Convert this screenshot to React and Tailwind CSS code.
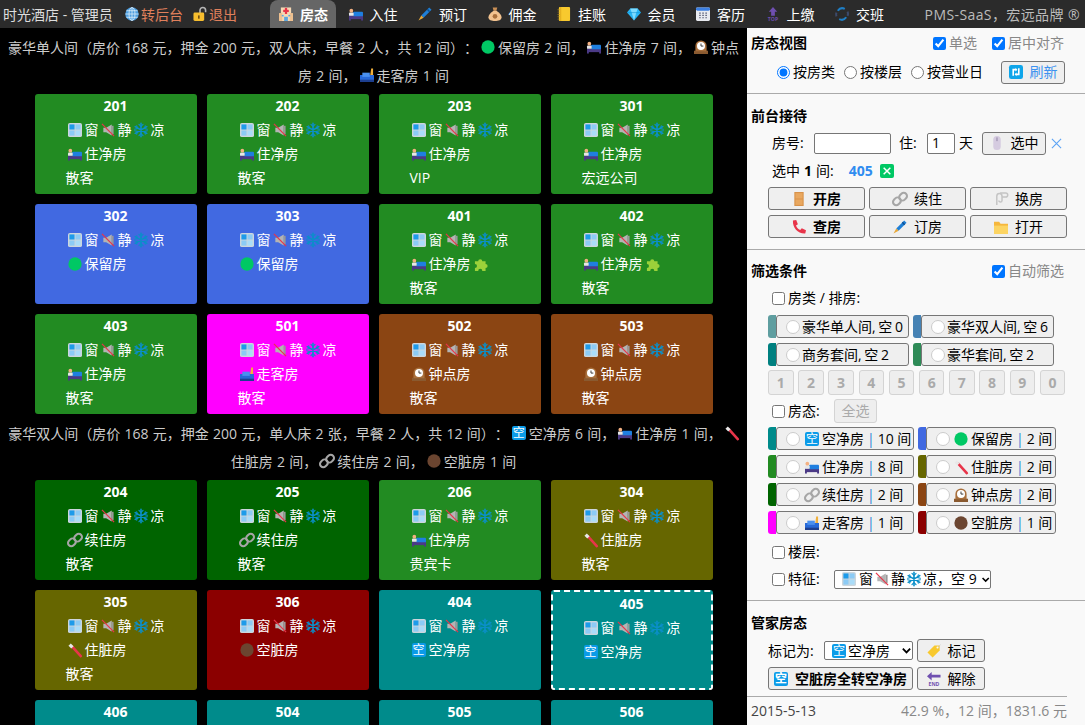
const Svg = ({ children, className = "w-[14px] h-[14px]" }) => (
  <svg viewBox="0.5 0.5 15 15" className={`${className} shrink-0 overflow-visible`}>
    {children}
  </svg>
);

const IconWindow = () => (
  <Svg>
    <rect x="0.5" y="0.5" width="15" height="15" rx="2" fill="#ccd6dd" />
    <rect x="2" y="2" width="5.5" height="5.5" fill="#1d9bea" />
    <rect x="8.5" y="2" width="5.5" height="5.5" fill="#8ccbf5" />
    <rect x="2" y="8.5" width="5.5" height="5.5" fill="#8ccbf5" />
    <rect x="8.5" y="8.5" width="5.5" height="5.5" fill="#a9dcf9" />
  </Svg>
);
const IconMute = () => (
  <Svg>
    <path d="M3 5.5h3L12 2v12l-6-3.5H3z" fill="#b4b4b4" />
    <path d="M12 3.5h2v9h-2z" fill="#999" />
    <path d="M1.5 1.5L14.5 14.5" stroke="#e8354a" strokeWidth="1.3" />
  </Svg>
);
const IconSnow = () => (
  <Svg>
    <g stroke="#0b8fc9" strokeLinecap="round" fill="none">
      <path d="M8 .8v14.4M1.8 4.4l12.4 7.2M14.2 4.4L1.8 11.6" strokeWidth="1.7" />
      <path d="M5.8 2L8 4.2 10.2 2M5.8 14L8 11.8 10.2 14M1.2 7.2l3-.7-.8-3M14.8 7.2l-3-.7.8-3M1.2 8.8l3 .7-.8 3M14.8 8.8l-3 .7.8 3" strokeWidth="1.2" />
    </g>
  </Svg>
);
const IconBed = () => (
  <Svg>
    <rect x="0.5" y="9.5" width="15" height="4" fill="#4b3a86" />
    <rect x="0.5" y="13" width="2" height="2" fill="#4b3a86" />
    <rect x="13.5" y="13" width="2" height="2" fill="#4b3a86" />
    <rect x="5" y="5.5" width="10.5" height="5" rx="1" fill="#1f7fe0" />
    <rect x="0.5" y="6.5" width="5" height="3.5" rx="1" fill="#e6e7e8" />
    <circle cx="3" cy="4.5" r="2" fill="#f4b183" />
  </Svg>
);
const IconDot = ({ color = "#00c864" }) => (
  <Svg>
    <circle cx="8" cy="8" r="7.1" fill={color} />
  </Svg>
);
const IconClock = () => (
  <Svg>
    <rect x="0.5" y="12" width="15" height="3.5" fill="#8a5a30" />
    <path d="M2 12.5V7a6 6 0 0112 0v5.5z" fill="#a86f3c" />
    <circle cx="8" cy="7" r="4.3" fill="#fff" />
    <path d="M8 4.3V7h2.5" stroke="#333" strokeWidth="1" fill="none" />
  </Svg>
);
const IconGuestOut = () => (
  <Svg>
    <path d="M.5 8h15v6H.5z" fill="#2769d8" />
    <rect x="3" y="5.5" width="8" height="4.5" fill="#4a90ee" />
    <rect x="0.5" y="13" width="15" height="2.5" fill="#1d3f8f" />
    <path d="M12.5 1h2v7h-3z" fill="#f0b03c" />
  </Svg>
);
const IconEmpty = () => (
  <span className="w-[14px] h-[14px] shrink-0 rounded-[2px] bg-[#0b9be8] text-white text-[12px] leading-[14px] text-center">
    空
  </span>
);
const IconLink = () => (
  <Svg>
    <g fill="none" stroke="#a6a6a6" strokeWidth="2.2">
      <rect x="7.8" y="1" width="7" height="9" rx="3.5" transform="rotate(45 11.3 5.5)" />
      <rect x="1.2" y="6" width="7" height="9" rx="3.5" transform="rotate(45 4.7 10.5)" />
    </g>
  </Svg>
);
const IconBrush = () => (
  <Svg>
    <path d="M5 4.5L14.2 14.5" stroke="#e8354a" strokeWidth="2.8" strokeLinecap="round" />
    <path d="M1 3.5L3.5 1 6.5 4 4 6.5z" fill="#e8e8e8" />
  </Svg>
);
const IconPuzzle = () => (
  <Svg>
    <path d="M1.5 5H5a2.2 2.2 0 114.4 0h3.5v3a2.2 2.2 0 110 4.4v3H9.4a2.2 2.2 0 10-4.4 0H1.5v-3a2.2 2.2 0 100-4.4z" fill="#9bd13a" />
  </Svg>
);
const IconGlobe = () => (
  <Svg>
    <circle cx="8" cy="8" r="7.2" fill="#4f9fe0" />
    <g fill="none" stroke="#d5e9f8" strokeWidth="0.9">
      <ellipse cx="8" cy="8" rx="3.2" ry="7" />
      <path d="M1 8h14M2 4.5h12M2 11.5h12M8 1v14" />
    </g>
  </Svg>
);
const IconLock = () => (
  <Svg>
    <path d="M8 7V4a3 3 0 016 0v2" fill="none" stroke="#b5b5b5" strokeWidth="1.7" />
    <rect x="1" y="6.5" width="11.5" height="9" rx="1.5" fill="#f6bd2e" />
    <rect x="5.9" y="9.5" width="1.7" height="3.5" fill="#6b4a10" />
  </Svg>
);
const IconHotel = () => (
  <Svg>
    <rect x="2.5" y="1" width="11" height="14.5" fill="#f7d9b4" />
    <rect x="0.5" y="7" width="3.5" height="8.5" fill="#eec08f" />
    <rect x="12" y="7" width="3.5" height="8.5" fill="#eec08f" />
    <rect x="6.8" y="1.5" width="2.4" height="6.5" fill="#e8354a" />
    <rect x="5" y="3.5" width="6" height="2.4" fill="#e8354a" />
    <rect x="6" y="11" width="4" height="4.5" fill="#5ba7e0" />
    <rect x="3.5" y="9" width="2" height="1.6" fill="#5ba7e0" />
    <rect x="10.5" y="9" width="2" height="1.6" fill="#5ba7e0" />
  </Svg>
);
const IconPen = () => (
  <Svg>
    <path d="M12.5 1L15 3.5 6.5 12 4 9.5z" fill="#1f7fd6" />
    <path d="M4 9.5L6.5 12 1 15z" fill="#e8a838" />
    <path d="M10.5 3L13 5.5" stroke="#0d4f90" strokeWidth="1.6" />
  </Svg>
);
const IconMoney = () => (
  <Svg>
    <path d="M5.5 1h5L9.5 4.5h-3z" fill="#c98f55" />
    <path d="M6.5 4.5h3C13.5 7 15 9.5 15 11.5c0 3-3.2 4-7 4s-7-1-7-4c0-2 1.5-4.5 5.5-7z" fill="#f2c28f" />
    <circle cx="8" cy="10.5" r="2.5" fill="#a86f3c" />
  </Svg>
);
const IconLedger = () => (
  <Svg>
    <rect x="2.5" y="0.5" width="12" height="15" rx="1" fill="#f8c92e" />
    <path d="M2 3v1M2 5.5v1M2 8v1M2 10.5v1M2 13v1" stroke="#8a6d1c" strokeWidth="2" />
    <rect x="4" y="0.5" width="1" height="15" fill="#dfa91c" />
  </Svg>
);
const IconDiamond = () => (
  <Svg>
    <path d="M4 2h8l3.5 4.5L8 15 .5 6.5z" fill="#29b6f6" />
    <path d="M4 2l1.5 4.5L8 15l2.5-8.5L12 2z" fill="#7fdcff" />
    <path d="M.5 6.5h15" stroke="#0d8fd0" strokeWidth="0.6" />
  </Svg>
);
const IconCalendar = () => (
  <Svg>
    <rect x="0.5" y="1" width="15" height="14.5" rx="1.5" fill="#e8eaf0" />
    <rect x="0.5" y="1" width="15" height="3.5" rx="1.5" fill="#3c7fe0" />
    <path d="M4 7h1.5M7.3 7h1.5M10.6 7h1.5M4 9.5h1.5M7.3 9.5h1.5M10.6 9.5h1.5M4 12h1.5M7.3 12h1.5M10.6 12h1.5" stroke="#4b4f6b" strokeWidth="1.3" />
  </Svg>
);
const IconTop = () => (
  <Svg>
    <path d="M8 0.5L12.5 5.5H10V10H6V5.5H3.5z" fill="#6f4fb0" />
    <text x="8" y="15.5" textAnchor="middle" fontSize="5.5" fontWeight="700" fill="#6f4fb0">TOP</text>
  </Svg>
);
const IconCycle = () => (
  <Svg>
    <g fill="none" strokeWidth="2.2">
      <path d="M3.5 4.5A6 6 0 0111 2.5" stroke="#1f7fc6" />
      <path d="M12.5 11.5A6 6 0 015 13.5" stroke="#1f7fc6" />
      <path d="M14 5.5A6 6 0 0114 10" stroke="#3c4a6b" />
      <path d="M2 6.5A6 6 0 002 10.5" stroke="#3c4a6b" />
    </g>
  </Svg>
);
const IconRefresh = () => (
  <Svg>
    <rect x="0.5" y="0.5" width="15" height="15" rx="2.5" fill="#0ea5ea" />
    <path d="M5 12V5.5h3M11 4v6.5H8" fill="none" stroke="#fff" strokeWidth="1.7" />
    <path d="M7.5 3.5l2 2-2 2M8.5 8.5l-2 2 2 2" fill="#fff" />
  </Svg>
);
const IconMouse = () => (
  <Svg>
    <rect x="4" y="0.5" width="8" height="15" rx="3.8" fill="#d5cbe0" />
    <path d="M8 2v4" stroke="#8b7fa0" strokeWidth="1" />
  </Svg>
);
const IconDoor = () => (
  <Svg>
    <rect x="3" y="0.5" width="10" height="15" fill="#d8924a" />
    <rect x="4.2" y="1.7" width="7.6" height="5.8" fill="#e9a860" />
    <rect x="4.2" y="8.5" width="7.6" height="5.8" fill="#e9a860" />
  </Svg>
);
const IconClip = () => (
  <Svg>
    <g fill="none" stroke="#c4c4c4" strokeWidth="1.6">
      <path d="M3.5 14.5V5a2.8 2.8 0 015.6 0v4.5a1.7 1.7 0 01-3.4 0" />
      <path d="M7 1.5h6a2.2 2.2 0 010 4.4H9" />
    </g>
  </Svg>
);
const IconPhone = () => (
  <Svg>
    <path d="M1.5 1L5 .5l1.8 4.500-2 1.500c.8 2.200 2.300 3.700 4.500 4.800l1.700-2 4.500 2.200-.8 3.500C7 15.500 1 9 1.500 1z" fill="#e8354a" />
  </Svg>
);
const IconFolder = () => (
  <Svg>
    <path d="M.5 2.5H6l1.500 2h8v11H.5z" fill="#f6b73c" />
    <path d="M.5 6.5h15v9H.5z" fill="#fcd462" />
  </Svg>
);
const IconTag = () => (
  <Svg>
    <path d="M8.5 2H14v5.500L6.500 15 1 9.500z" fill="#f8c92e" />
    <circle cx="11.8" cy="4.3" r="1.1" fill="#fff" />
    <path d="M12 4.3L15 1.3" stroke="#c4c4c4" strokeWidth="0.8" />
  </Svg>
);
const IconEnd = () => (
  <Svg>
    <path d="M.5 5L5.5.5v3H15v3H5.5v3z" fill="#6f4fb0" />
    <text x="8" y="15.5" textAnchor="middle" fontSize="5.5" fontWeight="700" fill="#6f4fb0">END</text>
  </Svg>
);

const statusMap = {
  clean: { label: "住净房", Icon: IconBed, bg: "bg-[#228b22]" },
  hold: { label: "保留房", Icon: IconDot, bg: "bg-[#4169e1]" },
  out: { label: "走客房", Icon: IconGuestOut, bg: "bg-[#ff00ff]" },
  hour: { label: "钟点房", Icon: IconClock, bg: "bg-[#8b4513]" },
  extend: { label: "续住房", Icon: IconLink, bg: "bg-[#006400]" },
  dirty: { label: "住脏房", Icon: IconBrush, bg: "bg-[#666600]" },
  emptyDirty: { label: "空脏房", Icon: () => <IconDot color="#6b4530" />, bg: "bg-[#8b0000]" },
  empty: { label: "空净房", Icon: IconEmpty, bg: "bg-[#008b8b]" },
};

const group1 = [
  { no: "201", s: "clean", guest: "散客" },
  { no: "202", s: "clean", guest: "散客" },
  { no: "203", s: "clean", guest: "VIP" },
  { no: "301", s: "clean", guest: "宏远公司" },
  { no: "302", s: "hold" },
  { no: "303", s: "hold" },
  { no: "401", s: "clean", guest: "散客", puzzle: true },
  { no: "402", s: "clean", guest: "散客", puzzle: true },
  { no: "403", s: "clean", guest: "散客" },
  { no: "501", s: "out", guest: "散客" },
  { no: "502", s: "hour", guest: "散客" },
  { no: "503", s: "hour", guest: "散客" },
];

const group2 = [
  { no: "204", s: "extend", guest: "散客" },
  { no: "205", s: "extend", guest: "散客" },
  { no: "206", s: "clean", guest: "贵宾卡" },
  { no: "304", s: "dirty", guest: "散客" },
  { no: "305", s: "dirty", guest: "散客" },
  { no: "306", s: "emptyDirty" },
  { no: "404", s: "empty" },
  { no: "405", s: "empty", selected: true },
  { no: "406", s: "empty" },
  { no: "504", s: "empty" },
  { no: "505", s: "empty" },
  { no: "506", s: "empty" },
];

function RoomCard({ room }) {
  const st = statusMap[room.s];
  return (
    <div
      className={`${st.bg} h-[100px] rounded-[3px] text-white text-[14px] leading-[24px] ${
        room.selected ? "border-2 border-dashed border-white" : ""
      }`}
    >
      <div className="text-center font-bold">{room.no}</div>
      <div className={`flex items-center gap-[2.5px] ${room.selected ? "pl-[31px]" : "pl-[33px]"}`}>
        <IconWindow />
        <span className="ml-[0.5px]">窗</span>
        <IconMute />
        <span>静</span>
        <IconSnow />
        <span>凉</span>
      </div>
      <div className={`flex items-center gap-[3px] ${room.selected ? "pl-[31px]" : "pl-[33px]"}`}>
        <st.Icon />
        <span>{st.label}</span>
        {room.puzzle && <IconPuzzle />}
      </div>
      {room.guest && <div className="pl-[31px]">{room.guest}</div>}
    </div>
  );
}

function RoomGrid({ rooms }) {
  return (
    <div className="grid grid-cols-[repeat(4,162px)] gap-[10px] justify-center">
      {rooms.map((r) => (
        <RoomCard key={r.no} room={r} />
      ))}
    </div>
  );
}

const tabs = [
  { label: "房态", Icon: IconHotel, active: true },
  { label: "入住", Icon: IconBed },
  { label: "预订", Icon: IconPen },
  { label: "佣金", Icon: IconMoney },
  { label: "挂账", Icon: IconLedger },
  { label: "会员", Icon: IconDiamond },
  { label: "客历", Icon: IconCalendar },
  { label: "上缴", Icon: IconTop },
  { label: "交班", Icon: IconCycle },
];

function TopBar() {
  return (
    <header className="h-[28px] bg-[#2b2b2b] flex items-center text-[14px] text-[#dddddd] shrink-0">
      <div className="w-[270px] flex items-center pl-[3px]">
        <span className="w-[122px]">时光酒店 - 管理员</span>
        <IconGlobe />
        <span className="ml-[2px] text-[#e0805c]">转后台</span>
        <span className="ml-[10px]">
          <IconLock />
        </span>
        <span className="ml-[2px] text-[#e0805c]">退出</span>
      </div>
      <nav className="flex gap-[3.5px] h-full">
        {tabs.map((t) => (
          <div
            key={t.label}
            className={`w-[66px] h-full flex items-center gap-[7px] pl-[9px] text-white rounded-t-[8px] ${
              t.active ? "bg-[#666666] font-bold" : ""
            }`}
          >
            <t.Icon />
            {t.label}
          </div>
        ))}
      </nav>
      <div className="ml-auto pr-[5px] text-[#bbbbbb] tracking-[0.4px]">PMS-SaaS，宏远品牌 ®</div>
    </header>
  );
}

const Check = ({ checked, label, grey }) => (
  <label className={`flex items-center gap-[3px] whitespace-nowrap ${grey ? "text-[#888888]" : ""}`}>
    <input type="checkbox" defaultChecked={checked} className="w-[13px] h-[13px] m-0" />
    {label}
  </label>
);

const Radio = ({ checked, label }) => (
  <label className="flex items-center gap-[3px] whitespace-nowrap">
    <input type="radio" name="view" defaultChecked={checked} className="w-[13px] h-[13px] m-0" />
    {label}
  </label>
);

const Btn = ({ Icon, label, bold, className = "" }) => (
  <button
    className={`h-[23px] flex items-center justify-center gap-[7px] bg-[#efefef] border border-[#767676] rounded-[3px] text-[14px] leading-none whitespace-nowrap ${
      bold ? "font-bold" : ""
    } ${className}`}
  >
    <Icon />
    {label}
  </button>
);

const RoundMark = () => (
  <span className="w-[14px] h-[14px] shrink-0 rounded-full bg-white border border-[#cccccc]" />
);

const SwatchBtn = ({ color, width, children }) => (
  <div className="flex h-[23px]">
    <span className={`w-[8px] rounded-l-[3px] ${color}`} />
    <div
      className={`${width} flex items-center gap-[2px] pl-[9px] bg-[#efefef] border border-[#767676] rounded-[3px] whitespace-nowrap`}
    >
      <RoundMark />
      {children}
    </div>
  </div>
);

const roomTypes = [
  { label: "豪华单人间, 空 0", color: "bg-[#5f9ea0]" },
  { label: "豪华双人间, 空 6", color: "bg-[#4682b4]" },
  { label: "商务套间, 空 2", color: "bg-[#008080]" },
  { label: "豪华套间, 空 2", color: "bg-[#2e8b57]" },
];

const statusFilters = [
  { Icon: IconEmpty, label: "空净房", n: "10", color: "bg-[#008b8b]" },
  { Icon: IconDot, label: "保留房", n: "2", color: "bg-[#4169e1]" },
  { Icon: IconBed, label: "住净房", n: "8", color: "bg-[#228b22]" },
  { Icon: IconBrush, label: "住脏房", n: "2", color: "bg-[#666600]" },
  { Icon: IconLink, label: "续住房", n: "2", color: "bg-[#006400]" },
  { Icon: IconClock, label: "钟点房", n: "2", color: "bg-[#8b4513]" },
  { Icon: IconGuestOut, label: "走客房", n: "1", color: "bg-[#ff00ff]" },
  { Icon: () => <IconDot color="#6b4530" />, label: "空脏房", n: "1", color: "bg-[#8b0000]" },
];

function SidePanel() {
  return (
    <aside className="w-[338px] shrink-0 bg-[#f9f9f9] text-[14px] leading-[22px] text-black overflow-hidden">
      {/* 房态视图 */}
      <section className="h-[66px] border-b border-[#aaaaaa] pl-[4px]">
        <div className="flex items-center h-[30px]">
          <b className="whitespace-nowrap">房态视图</b>
          <div className="ml-[126px] flex gap-[15px]">
            <Check checked grey label="单选" />
            <Check checked grey label="居中对齐" />
          </div>
        </div>
        <div className="flex items-center h-[28px] pl-[26px]">
          <div className="flex gap-[9px]">
            <Radio checked label="按房类" />
            <Radio label="按楼层" />
            <Radio label="按营业日" />
          </div>
          <Btn
            Icon={IconRefresh}
            label={<span className="text-[#3c92f0]">刷新</span>}
            className="w-[64px] ml-[18px]"
          />
        </div>
      </section>

      {/* 前台接待 */}
      <section className="h-[156px] border-b border-[#aaaaaa] pl-[4px] pt-[11px]">
        <b className="block">前台接待</b>
        <div className="flex items-center h-[24px] mt-[4px] pl-[21px]">
          <span className="w-[42px]">房号:</span>
          <input className="w-[77px] h-[21px] bg-white border border-[#767676] rounded-[2px]" />
          <span className="ml-[8px] w-[28px]">住:</span>
          <input
            defaultValue="1"
            className="w-[28px] h-[21px] pl-[4px] bg-white border border-[#767676] rounded-[2px]"
          />
          <span className="ml-[4px]">天</span>
          <Btn Icon={IconMouse} label="选中" className="w-[64px] ml-[9px]" />
          <svg viewBox="0 0 12 12" className="w-[11px] h-[11px] ml-[5px]">
            <path d="M1 1l10 10M11 1L1 11" stroke="#5ba3f5" strokeWidth="1.2" />
          </svg>
        </div>
        <div className="flex items-center mt-[5px] pl-[21px]">
          选中 <b className="mx-[4px]">1</b> 间:
          <b className="ml-[15px] text-[#2f8cf0]">405</b>
          <span className="ml-[7px] w-[14px] h-[14px] rounded-[2px] bg-[#00c864] flex items-center justify-center">
            <svg viewBox="0 0 12 12" className="w-[10px] h-[10px]">
              <path d="M2 2l8 8M10 2l-8 8" stroke="#fff" strokeWidth="1.8" />
            </svg>
          </span>
        </div>
        <div className="grid grid-cols-[repeat(3,97px)] gap-x-[4px] gap-y-[5px] mt-[5px] pl-[17px]">
          <Btn Icon={IconDoor} label="开房" bold />
          <Btn Icon={IconLink} label="续住" />
          <Btn Icon={IconClip} label="换房" />
          <Btn Icon={IconPhone} label="查房" bold />
          <Btn Icon={IconPen} label="订房" />
          <Btn Icon={IconFolder} label="打开" />
        </div>
      </section>

      {/* 筛选条件 */}
      <section className="h-[351px] border-b border-[#aaaaaa] pl-[4px] pt-[10px]">
        <div className="flex items-center">
          <b>筛选条件</b>
          <div className="ml-[185px]">
            <Check checked grey label="自动筛选" />
          </div>
        </div>
        <div className="mt-[5px] pl-[21px]">
          <Check label="房类 / 排房:" />
        </div>
        <div className="grid grid-cols-[141px_141px] gap-x-[4px] gap-y-[5px] mt-[6px] pl-[17px]">
          {roomTypes.map((t) => (
            <SwatchBtn key={t.label} color={t.color} width="w-[133px]">
              <span className="[word-spacing:-1px]">{t.label}</span>
            </SwatchBtn>
          ))}
        </div>
        <div className="flex gap-[4.7px] mt-[4px] pl-[17px]">
          {["1", "2", "3", "4", "5", "6", "7", "8", "9", "0"].map((n) => (
            <span
              key={n}
              className="w-[25.5px] h-[25px] flex items-center justify-center bg-[#eeeeee] border border-[#d4d4d4] rounded-[3px] font-bold text-[#aaaaaa]"
            >
              {n}
            </span>
          ))}
        </div>
        <div className="flex items-center h-[24px] mt-[4px] pl-[21px]">
          <div className="w-[62px]">
            <Check label="房态:" />
          </div>
          <span className="w-[43px] h-[24px] flex items-center justify-center bg-[#eeeeee] border border-[#d4d4d4] rounded-[3px] text-[#aaaaaa]">
            全选
          </span>
        </div>
        <div className="grid grid-cols-[146px_138px] gap-x-[4px] gap-y-[5px] mt-[4px] pl-[17px]">
          {statusFilters.map((s, i) => (
            <SwatchBtn key={s.label} color={s.color} width={i % 2 ? "w-[130px]" : "w-[138px]"}>
              <span className={`flex items-center gap-[3px] ${i % 2 ? "ml-[2px]" : "ml-[3px]"}`}>
                <s.Icon />
                {s.label} <span className="text-[#1f7fd6]">|</span> {s.n} 间
              </span>
            </SwatchBtn>
          ))}
        </div>
        <div className="mt-[7px] pl-[21px]">
          <Check label="楼层:" />
        </div>
        <div className="flex items-center h-[20px] mt-[6px] pl-[21px]">
          <div className="w-[62px]">
            <Check label="特征:" />
          </div>
          <div className="w-[157px] h-[19px] flex items-center gap-[2px] pl-[7px] bg-white border border-[#767676] rounded-[2px] whitespace-nowrap">
            <IconWindow />
            <span className="ml-[1px]">窗</span>
            <IconMute />
            <span>静</span>
            <IconSnow />
            <span>凉，空 9</span>
            <svg viewBox="0 0 12 12" className="w-[11px] h-[11px] ml-[2px]">
              <path d="M2 4l4 4 4-4" fill="none" stroke="#000" strokeWidth="2" />
            </svg>
          </div>
        </div>
      </section>

      {/* 管家房态 */}
      <section className="h-[95px] pl-[4px] pt-[11px]">
        <b className="block">管家房态</b>
        <div className="flex items-center mt-[5px] pl-[17px] h-[23px]">
          <span className="w-[56px]">标记为:</span>
          <div className="w-[89px] h-[19px] flex items-center gap-[2px] pl-[7px] bg-white border border-[#767676] rounded-[2px] whitespace-nowrap">
            <IconEmpty />
            空净房
            <svg viewBox="0 0 12 12" className="w-[11px] h-[11px] ml-[9px]">
              <path d="M2 4l4 4 4-4" fill="none" stroke="#000" strokeWidth="2" />
            </svg>
          </div>
          <Btn Icon={IconTag} label="标记" className="w-[68px] ml-[4px]" />
        </div>
        <div className="flex mt-[5px] pl-[17px]">
          <Btn Icon={IconEmpty} label="空脏房全转空净房" bold className="w-[145px]" />
          <Btn Icon={IconEnd} label="解除" className="w-[68px] ml-[4px]" />
        </div>
      </section>

      <footer className="w-[320px] border-t border-[#aaaaaa] h-[29px] flex items-center justify-between pl-[4px]">
        <span className="text-[#444444]">2015-5-13</span>
        <span className="text-[#888888]">42.9 %，12 间，1831.6 元</span>
      </footer>
    </aside>
  );
}

const Summary = ({ children }) => (
  <div className="flex items-center justify-center h-[28px] text-[14px] text-[#cccccc] gap-[3px] whitespace-pre [word-spacing:0.6px]">
    {children}
  </div>
);

export default function App() {
  return (
    <div className="h-screen flex flex-col overflow-hidden bg-black [text-spacing-trim:space-all] [font-family:'Open_Sans','Noto_Sans_CJK_SC',sans-serif]">
      <TopBar />
      <div className="flex flex-1 min-h-0">
        <main className="flex-1 overflow-hidden">
          <div className="py-[5px]">
            <Summary>
              豪华单人间（房价 168 元，押金 200 元，双人床，早餐 2 人，共 12 间）：
              <IconDot />
              保留房 2 间，
              <IconBed />
              住净房 7 间，
              <IconClock />
              钟点
            </Summary>
            <Summary>
              房 2 间，
              <IconGuestOut />
              走客房 1 间
            </Summary>
          </div>
          <RoomGrid rooms={group1} />
          <div className="py-[5px]">
            <Summary>
              豪华双人间（房价 168 元，押金 200 元，单人床 2 张，早餐 2 人，共 12 间）：
              <IconEmpty />
              空净房 6 间，
              <IconBed />
              住净房 1 间，
              <IconBrush />
            </Summary>
            <Summary>
              住脏房 2 间，
              <IconLink />
              续住房 2 间，
              <IconDot color="#6b4530" />
              空脏房 1 间
            </Summary>
          </div>
          <RoomGrid rooms={group2} />
        </main>
        <SidePanel />
      </div>
    </div>
  );
}
